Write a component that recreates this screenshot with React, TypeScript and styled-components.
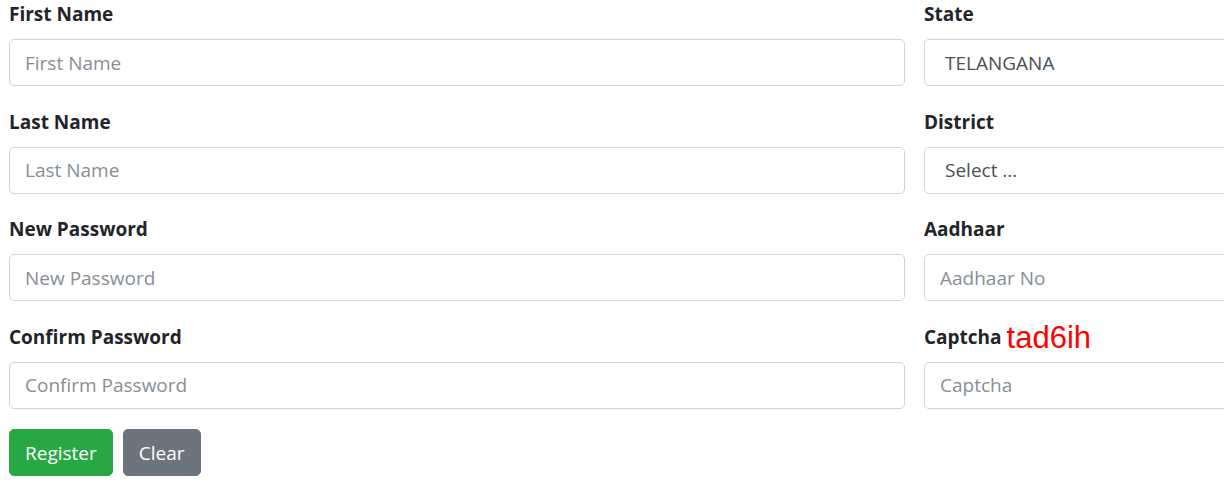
import React from 'react';
import styled, { createGlobalStyle } from 'styled-components';

const GlobalStyle = createGlobalStyle`
    html, body {
        margin: 0;
        padding: 0;
        background: #ffffff;
        overflow: hidden;
    }
    body {
        font-family: "Segoe UI", "Open Sans", "Noto Sans", sans-serif;
        color: #212529;
    }
`;

const Page = styled.div`
    width: 1224px;
    height: 487px;
    overflow: hidden;
    padding: 0 0 0 9px;
    box-sizing: border-box;
`;

const Grid = styled.div`
    display: grid;
    grid-template-columns: 896px 896px;
    column-gap: 19px;
    margin-top: -1px;
`;

const FormGroup = styled.div`
    display: flex;
    flex-direction: column;
    margin-bottom: 20.5px;
`;

const Label = styled.label`
    font-size: 19px;
    font-weight: 700;
    height: 30px;
    line-height: 30px;
    margin-bottom: 10px;
    display: flex;
    align-items: center;
    gap: 5px;
`;

const Captcha = styled.span`
    font-family: "Liberation Sans", Arial, sans-serif;
    font-weight: 400;
    font-size: 31px;
    color: #ff0000;
    line-height: 1;
    margin-top: 2px;
`;

const Input = styled.input`
    height: 47px;
    box-sizing: border-box;
    padding: 7px 15px;
    font-family: inherit;
    font-size: 19px;
    color: #495057;
    background: #fff;
    border: 1px solid #ced4da;
    border-radius: 5px;
    outline: none;

    &::placeholder {
        color: #868e96;
        opacity: 1;
    }
`;

const Select = styled.select`
    height: 47px;
    box-sizing: border-box;
    padding: 7px 15px 7px 16px;
    font-family: inherit;
    font-size: 19px;
    color: #495057;
    background: #fff;
    border: 1px solid #ced4da;
    border-radius: 5px;
    outline: none;
`;

const Buttons = styled.div`
    display: flex;
    gap: 10px;
`;

const Button = styled.button<{ variant: 'success' | 'secondary' }>`
    height: 47px;
    padding: 0 15px;
    font-family: inherit;
    font-size: 19px;
    color: #fff;
    border: 1px solid ${(p) => (p.variant === 'success' ? '#28a745' : '#6c757d')};
    background: ${(p) => (p.variant === 'success' ? '#28a745' : '#6c757d')};
    border-radius: 5px;
    cursor: pointer;
`;

const App = () => {
    return (
        <Page>
            <GlobalStyle />
            <Grid>
                <FormGroup>
                    <Label>First Name</Label>
                    <Input placeholder="First Name" />
                </FormGroup>
                <FormGroup>
                    <Label>State</Label>
                    <Select defaultValue="TELANGANA">
                        <option>TELANGANA</option>
                    </Select>
                </FormGroup>
                <FormGroup>
                    <Label>Last Name</Label>
                    <Input placeholder="Last Name" />
                </FormGroup>
                <FormGroup>
                    <Label>District</Label>
                    <Select defaultValue="">
                        <option value="">Select ...</option>
                    </Select>
                </FormGroup>
                <FormGroup>
                    <Label>New Password</Label>
                    <Input type="password" placeholder="New Password" />
                </FormGroup>
                <FormGroup>
                    <Label>Aadhaar</Label>
                    <Input placeholder="Aadhaar No" />
                </FormGroup>
                <FormGroup>
                    <Label>Confirm Password</Label>
                    <Input type="password" placeholder="Confirm Password" />
                </FormGroup>
                <FormGroup>
                    <Label>
                        Captcha <Captcha>tad6ih</Captcha>
                    </Label>
                    <Input placeholder="Captcha" />
                </FormGroup>
            </Grid>
            <Buttons>
                <Button variant="success">Register</Button>
                <Button variant="secondary">Clear</Button>
            </Buttons>
        </Page>
    );
};

export default App;
